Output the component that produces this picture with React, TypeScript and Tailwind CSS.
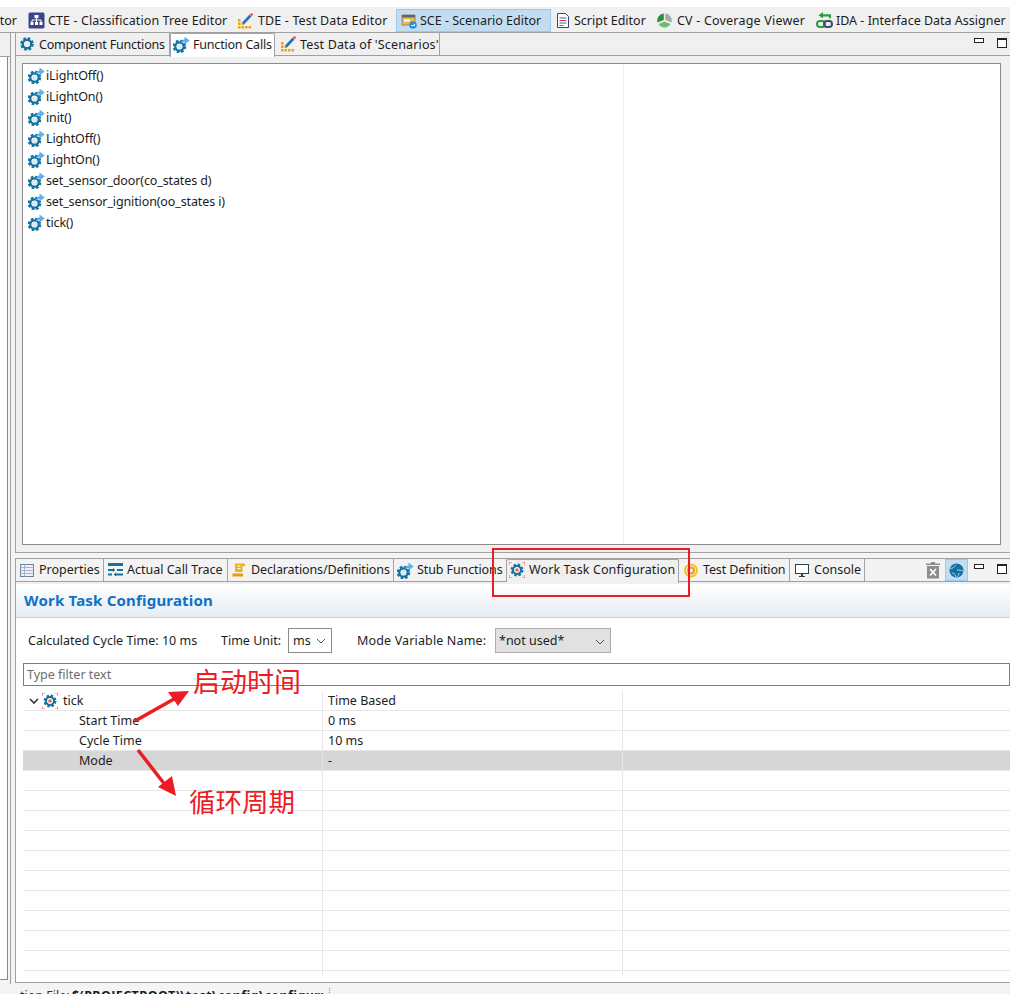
import React from "react";

const Gear = ({ x = 8, y = 8, r = 1, hub = "#ffffff" }: { x?: number; y?: number; r?: number; hub?: string }) => (
  <g transform={`translate(${x} ${y}) scale(${r})`}>
    <circle r="5.6" fill="none" stroke="#15719f" strokeWidth="2.4" strokeDasharray="2.6 1.8" />
    <circle r="4.2" fill="none" stroke="#15719f" strokeWidth="2.2" />
    <circle r="2.6" fill={hub} />
  </g>
);

const GearIcon = () => (
  <svg width="16" height="16" viewBox="0 0 16 16" className="shrink-0">
    <Gear hub="#e8f3f9" />
  </svg>
);

const TaskIcon = () => (
  <svg width="16" height="16" viewBox="0 0 16 16" className="shrink-0">
    <path d="M0 3V0h3M13 0h3v3M16 13v3h-3M3 16H0v-3" fill="none" stroke="#f0704a" strokeWidth="1.2" />
    <Gear r={0.95} />
    <circle cx="8" cy="8" r="1.8" fill="#e8673c" />
  </svg>
);

const CallIcon = () => (
  <svg width="17" height="17" viewBox="0 0 17 17" className="shrink-0">
    <Gear x={6.5} y={10.5} r={1} hub="#d7ecf7" />
    <path d="M8 6.500C8.500 4.500 10 3.300 11.500 3.200V0.500L16.800 4.500 11.500 8.500V6C10 6 9 6.500 8 7.500Z" fill="#62b2ea" />
  </svg>
);

const CteIcon = () => (
  <svg width="17" height="17" viewBox="0 0 17 17" className="shrink-0">
    <rect x="0.5" y="0.5" width="16" height="16" rx="1.5" fill="#3a4488" />
    <path d="M6.5 3h4v3h-4zM2.5 10h3v3h-3zM7 10h3v3H7zM11.5 10h3v3h-3z" fill="#fff" />
    <path d="M8.500 6v4M4 10V8h9v2" stroke="#fff" fill="none" />
  </svg>
);

const TdeIcon = () => (
  <svg width="15" height="16" viewBox="0 0 15 16" className="shrink-0">
    <path d="M0 6h2.500v2.500H0zM0 9.500h2.500V12H0zM0 13h2.500v2.500H0zM3.500 9.500H6V12H3.500zM3.500 13H6v2.500H3.500zM7 13h2.500v2.500H7zM10.500 13H13v2.500h-2.500z" fill="#e8a317" />
    <path d="M5 10.500L12.500 2.500" stroke="#2f6fb0" strokeWidth="2.600" />
    <path d="M12 1l1.500-1 1.500 1.500-1 1.800z" fill="#d5432c" />
  </svg>
);

const SceIcon = () => (
  <svg width="16" height="16" viewBox="0 0 16 16" className="shrink-0">
    <rect x="1" y="2" width="13" height="10" fill="#eebb44" stroke="#8a8a8a" />
    <rect x="1" y="2" width="13" height="2.500" fill="#5d6670" />
    <rect x="3" y="6.500" width="6" height="2" fill="#fff" />
    <circle cx="12" cy="12" r="3.800" fill="#2b93d6" />
    <path d="M10.500 12.500h3V11" stroke="#fff" fill="none" />
  </svg>
);

const ScriptIcon = () => (
  <svg width="12" height="15" viewBox="0 0 12 15" className="shrink-0">
    <path d="M0.500 0.500h8l3 3v11h-11z" fill="#fff" stroke="#2c4a78" />
    <path d="M2.500 5h7" stroke="#2b6cb0" />
    <path d="M2.500 7.500h7" stroke="#d13a3a" />
    <path d="M2.500 10h7" stroke="#2b6cb0" />
    <path d="M2.500 12.500h4" stroke="#d13a3a" />
  </svg>
);

const CvIcon = () => (
  <svg width="15" height="15" viewBox="0 0 15 15" className="shrink-0">
    <path d="M6.800 0.500A7 7 0 0 0 0.500 9.500L6.800 7z" fill="#2f8f3f" />
    <path d="M8.200 0.500A7 7 0 0 1 14.500 9.500L8.200 7z" fill="#a9a9a9" />
    <path d="M1.500 11L7.500 8.500 13.500 11A7 7 0 0 1 1.500 11z" fill="#6cc06c" />
  </svg>
);

const IdaIcon = () => (
  <svg width="17" height="17" viewBox="0 0 17 17" className="shrink-0">
    <path d="M7 0v6.500L2.500 3.200zM6 2.200h7v2.200H6z" fill="#2f9a3b" />
    <path d="M13 2.200h2v4h-2z" fill="#2f9a3b" />
    <rect x="1" y="9" width="8" height="6" rx="3" fill="none" stroke="#2f9a3b" strokeWidth="2" />
    <rect x="8" y="9" width="8" height="6" rx="3" fill="none" stroke="#3b4f6b" strokeWidth="2" />
  </svg>
);

const TableIcon = () => (
  <svg width="14" height="13" viewBox="0 0 14 13" className="shrink-0">
    <rect x="0.500" y="0.500" width="13" height="12" fill="#eef2f8" stroke="#6f7f9b" />
    <path d="M0.500 3.500h13M0.500 6.500h13M0.500 9.500h13M4.500 0.500v12" stroke="#a8b4c8" fill="none" />
  </svg>
);

const TraceIcon = () => (
  <svg width="15" height="14" viewBox="0 0 15 14" className="shrink-0">
    <rect x="0" y="0" width="15" height="3" fill="#15719f" />
    <path d="M0 7h5M9 7h6M0 11.500h4M8 11.500h7" stroke="#15719f" strokeWidth="2" />
    <path d="M5 5v4l2-2zM8 9.500v4l-2-2z" fill="#2f3f55" />
  </svg>
);

const DeclIcon = () => (
  <svg width="14" height="14" viewBox="0 0 14 14" className="shrink-0">
    <path d="M3 0.500h10v2.500h-2.500v6H3z" fill="#f2b21b" />
    <path d="M5.500 3h3M5.500 5.500h3" stroke="#fff" />
    <path d="M0.500 10.500h10.500v3H0.500z" fill="#e79b0d" />
  </svg>
);

const TargetIcon = () => (
  <svg width="14" height="15" viewBox="0 0 14 15" className="shrink-0">
    <circle cx="7" cy="7.500" r="6" fill="none" stroke="#f4c21f" strokeWidth="2" />
    <circle cx="7" cy="7.500" r="3" fill="none" stroke="#ee9a1a" strokeWidth="2" />
  </svg>
);

const MonitorIcon = () => (
  <svg width="14" height="13" viewBox="0 0 14 13" className="shrink-0">
    <rect x="0.500" y="0.500" width="13" height="9" fill="#fff" stroke="#2d3f55" />
    <path d="M4 12h6v1H4zM6 10h2v2H6z" fill="#2d3f55" />
  </svg>
);

const TrashIcon = () => (
  <svg width="14" height="17" viewBox="0 0 14 17">
    <path d="M0 1.500h14V3H0zM5 0h4v1.500H5z" fill="#8c8c8c" />
    <rect x="1" y="4" width="12" height="12.500" fill="#8c8c8c" />
    <path d="M4 7l6 6.500M10 7l-6 6.500" stroke="#fff" strokeWidth="1.800" />
  </svg>
);

const GlobeIcon = () => (
  <svg width="15" height="15" viewBox="0 0 15 15">
    <circle cx="7.500" cy="7.500" r="7" fill="#15719f" />
    <path d="M1 5c3 1 4-1 6-3M8 7c2 0 4 0 6 1M3 10c2 0 3 1 4 4M10 10c0 2-1 3-2 4" stroke="#a9d3ee" fill="none" />
  </svg>
);

const WinButtons = () => (
  <div className="flex items-start gap-[13px]">
    <span className="block w-[10px] h-[5px] border border-[#222222] bg-white" />
    <span className="block w-[10px] h-[10px] border border-[#222222] border-t-2 bg-white" />
  </div>
);

const Chevron = ({ className = "", dark }: { className?: string; dark?: boolean }) => (
  <svg width="10" height="6" viewBox="0 0 10 6" className={className}>
    <path d="M1 1l4 4 4-4" fill="none" stroke={dark ? "#333333" : "#555555"} strokeWidth={dark ? 1.6 : 1} />
  </svg>
);

const toolbar = [
  { label: "CTE - Classification Tree Editor", icon: <CteIcon />, cls: "ml-[11px] w-[210px] gap-[3px] tracking-[0.1px]" },
  { label: "TDE - Test Data Editor", icon: <TdeIcon />, cls: "w-[158px] gap-[5px] tracking-[0.14px]" },
  { label: "SCE - Scenario Editor", icon: <SceIcon />, cls: "w-[155px] pl-[4px] gap-[3px] bg-[#c3dcf0] border border-[#99c9ef]" },
  { label: "Script Editor", icon: <ScriptIcon />, cls: "ml-[6px] w-[100px] gap-[5px]" },
  { label: "CV - Coverage Viewer", icon: <CvIcon />, cls: "w-[159px] gap-[5px] tracking-[0.2px]" },
  { label: "IDA - Interface Data Assigner", icon: <IdaIcon />, cls: "w-[194px] gap-[3px]" },
];

const topTabs = [
  { label: "Component Functions", icon: <GearIcon />, cls: "w-[154px] pl-[3px] gap-[4px] tracking-[-0.2px]" },
  { label: "Function Calls", icon: <CallIcon />, cls: "w-[105px] pl-[2px] gap-[3px] tracking-[-0.2px]", active: true },
  { label: "Test Data of 'Scenarios'", icon: <TdeIcon />, cls: "w-[165px] pl-[6px] gap-[4px] tracking-[0.15px]" },
];

const bottomTabs = [
  { label: "Properties", icon: <TableIcon />, cls: "w-[88px] pl-[4px] gap-[5px]" },
  { label: "Actual Call Trace", icon: <TraceIcon />, cls: "w-[124px] pl-[4px] gap-[4px]" },
  { label: "Declarations/Definitions", icon: <DeclIcon />, cls: "w-[166px] pl-[4px] gap-[5px] tracking-[-0.12px]" },
  { label: "Stub Functions", icon: <CallIcon />, cls: "w-[113px] pl-[3px] gap-[3px] tracking-[-0.1px]" },
  { label: "Work Task Configuration", icon: <TaskIcon />, cls: "w-[172px] pl-[2px] gap-[4px] tracking-[0.1px]", active: true },
  { label: "Test Definition", icon: <TargetIcon />, cls: "w-[111px] pl-[5px] gap-[5px] tracking-[-0.14px]" },
  { label: "Console", icon: <MonitorIcon />, cls: "w-[75px] pl-[5px] gap-[5px]" },
];

const functions = [
  "iLightOff()",
  "iLightOn()",
  "init()",
  "LightOff()",
  "LightOn()",
  "set_sensor_door(co_states d)",
  "set_sensor_ignition(oo_states i)",
  "tick()",
];

const rows = [
  { name: "tick", value: "Time Based", root: true },
  { name: "Start Time", value: "0 ms" },
  { name: "Cycle Time", value: "10 ms" },
  { name: "Mode", value: "-", selected: true },
  ...Array.from({ length: 10 }, () => ({ name: "", value: "" })),
];

type Tab = { label: string; icon: React.ReactNode; cls: string; active?: boolean };

const TabItem = ({ tab, activeBg, labelCls }: { tab: Tab; activeBg: string; labelCls: string }) => (
  <div
    className={`flex items-start h-[24px] shrink-0 border-r border-[#a3a3a3] whitespace-nowrap overflow-hidden ${tab.cls} ${
      tab.active ? `relative z-10 rounded-t-[2px] ${activeBg}` : "!h-[22px]"
    }`}
  >
    <div className={`flex items-center h-[22px] gap-[inherit] ${tab.active ? "-mt-[1px]" : ""}`}>
      {tab.icon}
      <span className={labelCls}>{tab.label}</span>
    </div>
  </div>
);

export default function App() {
  return (
    <div className="relative w-[1010px] h-[994px] overflow-hidden bg-[#f4f4f4] text-[12.5px] text-[#1c1c1c] font-['Noto_Sans','Noto_Sans_CJK_SC',sans-serif]">
      <div className="h-[7px] bg-white" />

      {/* perspective switcher */}
      <div className="flex items-start h-[26px] pt-[2px] bg-[#f0f0f0] border-b border-[#a0a0a0] whitespace-nowrap overflow-hidden">
        <span className="w-[17px] h-[22px] pt-[2px] flex items-center justify-end overflow-hidden shrink-0">tor</span>
        {toolbar.map((t) => (
          <div key={t.label} className={`flex items-center h-[23px] shrink-0 ${t.cls}`}>
            {t.icon}
            <span className="pt-[2px]">{t.label}</span>
          </div>
        ))}
      </div>

      <div className="flex h-[951px]">
        {/* collapsed left pane */}
        <div className="flex shrink-0 w-[15px]">
          <div className="w-[11px] border-r border-[#a0a0a0] flex flex-col">
            <div className="h-[24px] bg-[#f0f0f0] border-b border-[#a0a0a0]" />
            <div className="h-[923px] w-[8px] bg-white border-r border-b border-[#888888]" />
          </div>
        </div>

        <div className="flex flex-col flex-1 min-w-0">
          {/* upper pane */}
          <div className="h-[520px] border-l border-b border-[#a0a0a0] bg-[#f0f0f0] flex flex-col">
            <div className="flex items-start justify-between h-[23px] border-b border-[#a0a0a0]">
              <div className="flex items-start h-[23px]">
                {topTabs.map((t) => (
                  <TabItem key={t.label} tab={t} labelCls="pt-[2px]" activeBg="bg-white border-l border-t" />
                ))}
              </div>
              <div className="pt-[5px] pr-[3px]">
                <WinButtons />
              </div>
            </div>
            <div className="px-[6px] pt-[7px] pb-[7px] flex-1 min-h-0 flex">
              <div className="w-[979px] flex bg-white border border-[#8c8c8c]">
                <div className="w-[601px] border-r border-[#eef2f6] pt-[1px]">
                  {functions.map((f) => (
                    <div key={f} className="flex items-center h-[21px] pl-[5px] gap-[1px] tracking-[-0.12px]">
                      <CallIcon />
                      <span className="pt-[2px]">{f}</span>
                    </div>
                  ))}
                </div>
              </div>
            </div>
          </div>

          <div className="h-[5px]" />

          {/* lower pane */}
          <div className="h-[425px] border-l border-b border-t border-[#a0a0a0] bg-white flex flex-col">
            <div className="flex justify-between h-[23px] border-b border-[#a0a0a0] bg-[#f3f3f3]">
              <div className="flex items-start h-[23px]">
                {bottomTabs.map((t) => (
                  <TabItem key={t.label} tab={t} labelCls="" activeBg="bg-[#f0f0f0] border-t border-[#a3a3a3]" />
                ))}
              </div>
              <div className="flex items-start">
                <span className="w-[22px] h-[22px] pl-[3px] flex items-center">
                  <TrashIcon />
                </span>
                <span className="w-[23px] h-[22px] flex items-center justify-center bg-[#c3dcf0] border border-[#99c9ef] mr-[6px]">
                  <GlobeIcon />
                </span>
                <div className="pt-[5px] pr-[3px]">
                  <WinButtons />
                </div>
              </div>
            </div>
            <div className="h-[2px] bg-[#f0f0f0]" />

            <div className="h-[34px] bg-gradient-to-b from-white to-[#e6ecf3] border-b border-[#c8d3de] flex items-center pl-[8px] text-[15px] font-bold tracking-[0.2px] text-[#0f72c7]">
              Work Task Configuration
            </div>

            <div className="flex items-center h-[45px] pl-[12px]">
              <span className="w-[193px] pt-[2px]">Calculated Cycle Time: 10 ms</span>
              <span className="w-[67px] pt-[2px]">Time Unit:</span>
              <span className="flex items-center justify-between w-[44px] h-[25px] px-[4px] pt-[1px] border border-[#8c8c8c] bg-white">
                ms
                <Chevron className="mr-[1px]" />
              </span>
              <span className="w-[138px] ml-[25px] pt-[2px] tracking-[0.15px]">Mode Variable Name:</span>
              <span className="flex items-center justify-between w-[116px] h-[25px] pl-[3px] pr-[4px] pt-[2px] border border-[#adadad] bg-[#e1e1e1]">
                *not used*
                <Chevron className="mr-[1px]" />
              </span>
            </div>

            <div className="ml-[7px] h-[23px] border border-[#7f7f7f] flex items-center pl-[3px] pt-[2px] text-[#6d6d6d]">
              Type filter text
            </div>

            <div className="ml-[7px] mt-[5px]">
              {rows.map((r, i) => (
                <div
                  key={i}
                  className={`flex h-[20px] border-b border-[#e6e6e6] ${r.selected ? "bg-[#d6d6d6]" : ""}`}
                >
                  <div className="flex items-center w-[300px] border-r border-[#e6e6e6]">
                    {r.root ? (
                      <div className="flex items-center pl-[6px]">
                        <Chevron dark className="mr-[3px]" />
                        <TaskIcon />
                        <span className="ml-[5px] pt-[2px]">{r.name}</span>
                      </div>
                    ) : (
                      <span className="pl-[56px] pt-[2px]">{r.name}</span>
                    )}
                  </div>
                  <div className="flex items-center w-[300px] pl-[5px] pt-[2px] border-r border-[#e6e6e6]">{r.value}</div>
                </div>
              ))}
              <div className="flex h-[4px]">
                <div className="w-[300px] border-r border-[#e6e6e6]" />
                <div className="w-[300px] border-r border-[#e6e6e6]" />
              </div>
            </div>
          </div>
        </div>
      </div>

      {/* status line, cut off by the bottom of the shot */}
      <div className="flex items-start whitespace-nowrap h-[10px] pl-[20px] pt-[4px] leading-[16px]">
        <span className="w-[52px] text-[#333333] overflow-hidden">tion File:</span>
        <span className="font-bold tracking-[0.4px]">$(PROJECTROOT)\test\config\configur:</span>
        <span className="ml-[5px] h-[7px] border-l border-dotted border-[#888888]" />
      </div>

      {/* annotations drawn over the screenshot */}
      <div className="absolute z-20 left-[492px] top-[548px] w-[198px] h-[49px] border-2 border-[#ed1c24]" />
      <svg className="absolute z-20 left-0 top-0 pointer-events-none" width="1010" height="994">
        <path d="M135 721L174 699" stroke="#ed1c24" strokeWidth="3.500" />
        <path d="M189 691L168 692 178 706z" fill="#ed1c24" />
        <path d="M138 750L166 786" stroke="#ed1c24" strokeWidth="3.500" />
        <path d="M176 796L158 787 172 776z" fill="#ed1c24" />
      </svg>
      <div className="absolute z-20 left-[193px] top-[664px] text-[27px] leading-[36px] text-[#ed1c24] whitespace-nowrap">启动时间</div>
      <div className="absolute z-20 left-[189px] top-[784px] text-[26.5px] leading-[36px] text-[#ed1c24] whitespace-nowrap">循环周期</div>
    </div>
  );
}
